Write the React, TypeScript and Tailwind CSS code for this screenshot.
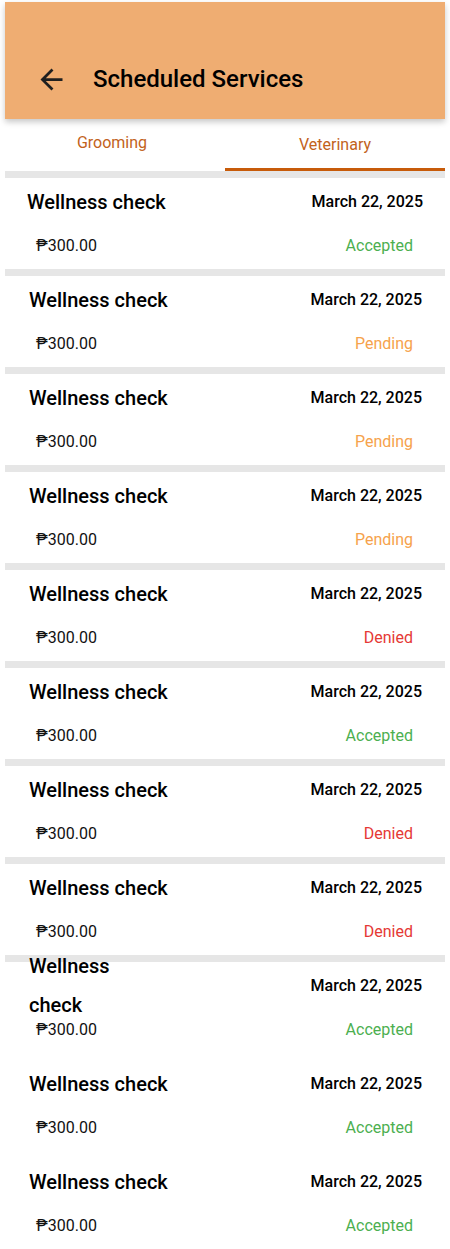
import React from 'react';

// --- Data ---
type Status = 'Accepted' | 'Pending' | 'Denied';

interface Booking {
    id: number;
    service: string;
    date: string;
    price: string;
    status: Status;
    wrap?: boolean;
    plainDivider?: boolean;
}

const BOOKINGS: Booking[] = [
    { id: 1, service: 'Wellness check', date: 'March 22, 2025', price: '₱300.00', status: 'Accepted' },
    { id: 2, service: 'Wellness check', date: 'March 22, 2025', price: '₱300.00', status: 'Pending' },
    { id: 3, service: 'Wellness check', date: 'March 22, 2025', price: '₱300.00', status: 'Pending' },
    { id: 4, service: 'Wellness check', date: 'March 22, 2025', price: '₱300.00', status: 'Pending' },
    { id: 5, service: 'Wellness check', date: 'March 22, 2025', price: '₱300.00', status: 'Denied' },
    { id: 6, service: 'Wellness check', date: 'March 22, 2025', price: '₱300.00', status: 'Accepted' },
    { id: 7, service: 'Wellness check', date: 'March 22, 2025', price: '₱300.00', status: 'Denied' },
    { id: 8, service: 'Wellness check', date: 'March 22, 2025', price: '₱300.00', status: 'Denied' },
    { id: 9, service: 'Wellness check', date: 'March 22, 2025', price: '₱300.00', status: 'Accepted', wrap: true },
    { id: 10, service: 'Wellness check', date: 'March 22, 2025', price: '₱300.00', status: 'Accepted', plainDivider: true },
    { id: 11, service: 'Wellness check', date: 'March 22, 2025', price: '₱300.00', status: 'Accepted', plainDivider: true },
];

const STATUS_COLOR: Record<Status, string> = {
    Accepted: 'text-[#4caf50]',
    Pending: 'text-[#f6a24c]',
    Denied: 'text-[#e53935]',
};

// --- Pieces ---
const BackArrow = () => (
    <svg width="33" height="33" viewBox="0 0 24 24" fill="#1f1f1f">
        <path d="M20 11H7.83l5.59-5.59L12 4l-8 8 8 8 1.41-1.41L7.83 13H20v-2z" />
    </svg>
);

const BookingCard = ({ booking, first }: { booking: Booking; first: boolean }) => (
    <div>
        <div className={booking.plainDivider ? 'h-[7px] bg-white' : 'h-[7px] bg-[#e6e6e6]'} />
        <div className="flex h-[91px] flex-col bg-white">
            <div className={`flex h-[48px] items-center justify-between ${first ? 'pl-[22px] pr-[22px]' : 'pl-[24px] pr-[23px]'}`}>
                <span className={`text-[20px] font-medium text-black ${booking.wrap ? 'w-[100px] leading-[39px]' : 'leading-[26px]'}`}>
                    {booking.service}
                </span>
                <span className="text-[16px] font-medium text-black">{booking.date}</span>
            </div>
            <div className="flex h-[39px] items-center justify-between pl-[31px] pr-[32px]">
                <span className="text-[16px] text-[#111]">{booking.price}</span>
                <span className={`text-[16px] ${STATUS_COLOR[booking.status]}`}>{booking.status}</span>
            </div>
        </div>
    </div>
);

// --- Main Screen ---
export default function App() {
    return (
        <div className="min-h-screen bg-white px-[5px] pt-[2px] font-['Roboto',sans-serif]">
            {/* App bar */}
            <header className="relative z-10 flex h-[117px] items-center gap-[25px] bg-[#efad72] pl-[30px] pt-[37px] shadow-[0_3px_6px_rgba(0,0,0,0.22)]">
                <BackArrow />
                <h1 className="text-[24px] font-medium text-black">Scheduled Services</h1>
            </header>

            {/* Tabs */}
            <div className="grid h-[52px] grid-cols-2">
                <button className="flex items-center justify-center pb-[4px] pr-[6px] text-[16px] text-[#c2621b]">Grooming</button>
                <button className="flex items-center justify-center border-b-[3px] border-[#c75b0a] pt-[2px] text-[16px] text-[#c2621b]">
                    Veterinary
                </button>
            </div>

            {/* Booking list */}
            <div>
                {BOOKINGS.map((b, i) => (
                    <BookingCard key={b.id} booking={b} first={i === 0} />
                ))}
            </div>
        </div>
    );
}
